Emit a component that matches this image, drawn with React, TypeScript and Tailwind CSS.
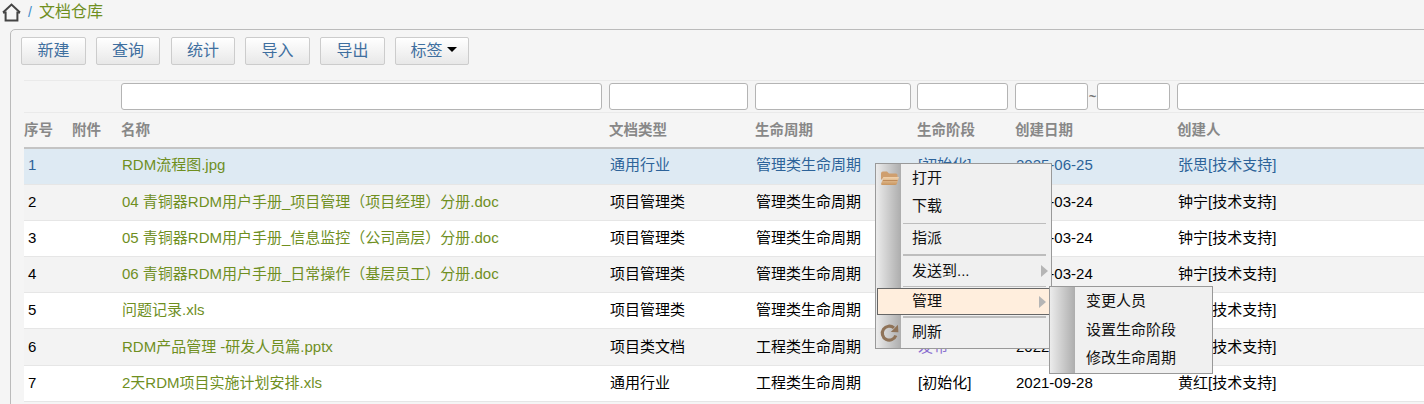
import type { ReactNode } from 'react'

const FONT = "font-['Liberation_Sans','Noto_Sans_CJK_SC',sans-serif]"
const GRID = 'grid grid-cols-[48px_49px_488px_146px_162px_98px_162px_300px]'

type Doc = {
  id: number
  name: string
  type: string
  cycle: string
  stage: string
  date: string
  owner: string
}

const docs: Doc[] = [
  { id: 1, name: 'RDM流程图.jpg', type: '通用行业', cycle: '管理类生命周期', stage: '[初始化]', date: '2025-06-25', owner: '张思[技术支持]' },
  { id: 2, name: '04 青铜器RDM用户手册_项目管理（项目经理）分册.doc', type: '项目管理类', cycle: '管理类生命周期', stage: '[初始化]', date: '2021-03-24', owner: '钟宁[技术支持]' },
  { id: 3, name: '05 青铜器RDM用户手册_信息监控（公司高层）分册.doc', type: '项目管理类', cycle: '管理类生命周期', stage: '[初始化]', date: '2021-03-24', owner: '钟宁[技术支持]' },
  { id: 4, name: '06 青铜器RDM用户手册_日常操作（基层员工）分册.doc', type: '项目管理类', cycle: '管理类生命周期', stage: '[初始化]', date: '2021-03-24', owner: '钟宁[技术支持]' },
  { id: 5, name: '问题记录.xls', type: '项目管理类', cycle: '管理类生命周期', stage: '[初始化]', date: '2021-03-24', owner: '钟宁[技术支持]' },
  { id: 6, name: 'RDM产品管理 -研发人员篇.pptx', type: '项目类文档', cycle: '工程类生命周期', stage: '发布', date: '2022-03-24', owner: '钟宁[技术支持]' },
  { id: 7, name: '2天RDM项目实施计划安排.xls', type: '通用行业', cycle: '工程类生命周期', stage: '[初始化]', date: '2021-09-28', owner: '黄红[技术支持]' },
]

const buttons = [
  { label: '新建', width: 'w-[65px]' },
  { label: '查询', width: 'w-[64px]' },
  { label: '统计', width: 'ml-px w-[64px]' },
  { label: '导入', width: 'w-[65px]' },
  { label: '导出', width: 'w-[65px]' },
]

const btnClass =
  'h-[28px] rounded-[2px] border border-[#cccccc] bg-gradient-to-b from-white to-[#e8e8e8] text-[16px] text-[#3f6f9f] flex items-center justify-center'

function FilterInput({ className }: { className: string }) {
  return <div className={`h-[27px] rounded-[3px] border border-[#b4b4b4] bg-white ${className}`} />
}

function FolderIcon() {
  return (
    <svg width="20" height="16" viewBox="0 0 20 16">
      <defs>
        <linearGradient id="folderFill" x1="0" y1="0" x2="0" y2="1">
          <stop offset="0" stopColor="#f1d3ae" />
          <stop offset="1" stopColor="#c8955f" />
        </linearGradient>
      </defs>
      <path d="M1 3.5 Q1 1.5 3 1.5 H7 L9 3.5 H16 Q17.5 3.5 17.5 5 V7 H4 L1 10 Z" fill="#cf9f6f" />
      <path d="M1 14 L3.5 7 H19 L17 13.5 Q16.6 15 15 15 H2.5 Q1 15 1 14 Z" fill="url(#folderFill)" />
      <path d="M3 10.5 H17.5" stroke="#b57f4c" strokeWidth="0.8" />
    </svg>
  )
}

function RefreshIcon() {
  return (
    <svg width="19" height="19" viewBox="0 0 18 18" fill="none">
      <path d="M15 11.4 A6.6 6.6 0 1 1 13.2 4.2" stroke="#8f7358" strokeWidth="3" />
      <path d="M10.2 8 L17.4 8.2 L17 1.2 Z" fill="#8f7358" />
    </svg>
  )
}

function Arrow() {
  return <span className="absolute right-[3px] top-1/2 -translate-y-1/2 border-y-[6px] border-l-[7px] border-y-transparent border-l-[#b5b5b5]" />
}

function Sep({ height, thick }: { height: string; thick?: boolean }) {
  return (
    <div className={`flex items-center pl-[27px] pr-[5px] ${height}`}>
      <div className={`w-full bg-[#bdbdbd] ${thick ? 'h-[2px]' : 'h-px'}`} />
    </div>
  )
}

function MenuItem({ label, height, icon, arrow, active }: { label: string; height: string; icon?: ReactNode; arrow?: boolean; active?: boolean }) {
  return (
    <div
      className={`relative flex items-center text-[15px] text-[#111111] ${height} ${
        active ? 'mx-px border border-[#666666] bg-[#ffeedd] pl-[34px]' : 'pl-[36px]'
      }`}
    >
      {icon && <span className="absolute left-[4px] top-1/2 -translate-y-1/2">{icon}</span>}
      {label}
      {arrow && <Arrow />}
    </div>
  )
}

function MenuShell({ className, strip, children }: { className: string; strip: string; children: ReactNode }) {
  return (
    <div className={`absolute border border-[#999999] bg-[#f0f0f0] ${className}`}>
      <div className={`absolute inset-y-0 left-0 bg-gradient-to-r from-[#ececec] to-[#adadad] ${strip}`} />
      <div className="relative">{children}</div>
    </div>
  )
}

export default function App() {
  return (
    <div className={`relative h-[404px] w-[1424px] overflow-hidden bg-[#f5f5f5] ${FONT}`}>
      {/* 面包屑 */}
      <div className="flex h-[29px] items-center pb-[5px] pl-[2px]">
        <svg width="19" height="19" viewBox="0 0 19 19" fill="none" stroke="#444444" strokeWidth="2">
          <path d="M1 9.5 L9.5 1.5 L18 9.5" />
          <path d="M1 9.5 H3.6 V17.6 H15.4 V9.5 H18" />
        </svg>
        <span className="ml-[7px] text-[14px] text-[#428bca]">/</span>
        <span className="ml-[7px] text-[16px] text-[#6f8f1f]">文档仓库</span>
      </div>

      {/* 主面板 */}
      <div className="ml-[10px] h-[400px] w-[1500px] rounded-tl-[5px] border border-[#bbbbbb] pl-[10px] pt-[7px]">
        <div className="flex gap-[10px]">
          {buttons.map((b) => (
            <div key={b.label} className={`${btnClass} ${b.width}`}>{b.label}</div>
          ))}
          <div className={`${btnClass} w-[74px] gap-[4px] pl-[3px]`}>
            标签
            <span className="mb-[4px] border-x-[5px] border-t-[5px] border-x-transparent border-t-black" />
          </div>
        </div>

        <div className="ml-[3px] mt-[15px] border-y border-[#eaeaea] pb-[2px] pt-[2px]">
          <div className={GRID}>
            <div />
            <div />
            <FilterInput className="w-[481px]" />
            <FilterInput className="w-[139px]" />
            <FilterInput className="w-[156px]" />
            <FilterInput className="w-[91px]" />
            <div className="flex items-center">
              <FilterInput className="w-[73px]" />
              <span className="w-[9px] text-center text-[13px] font-bold text-[#777777]">~</span>
              <FilterInput className="w-[73px]" />
            </div>
            <FilterInput className="w-[300px]" />
          </div>
        </div>

        <div className={`${GRID} ml-[3px] h-[36px] items-center border-b-[2px] border-[#c4c4c4] pt-px text-[14.5px] font-bold text-[#888888]`}>
          <div>序号</div>
          <div>附件</div>
          <div>名称</div>
          <div>文档类型</div>
          <div>生命周期</div>
          <div>生命阶段</div>
          <div>创建日期</div>
          <div>创建人</div>
        </div>

        {docs.map((d) => {
          const first = d.id === 1
          const bg = first ? 'bg-[#deeaf3]' : d.id % 2 === 0 ? 'bg-[#f3f3f3]' : 'bg-white'
          return (
            <div
              key={d.id}
              className={`${GRID} ml-[3px] items-center border-b border-[#e6e6e6] text-[15px] ${d.id === 6 ? 'h-[37px]' : 'h-[36px]'} ${bg} ${first ? 'pb-[2px] text-[#2d6399]' : 'text-black'}`}
            >
              <div className="pl-[4px]">{d.id}</div>
              <div />
              <div className="pl-[1px] text-[#6f8f1f]">{d.name}</div>
              <div className="pl-[1px]">{d.type}</div>
              <div className="pl-[1px]">{d.cycle}</div>
              <div className={`pl-[1px] ${d.stage === '发布' ? 'text-[#8a6fd0]' : ''}`}>{d.stage}</div>
              <div className="pl-[1px]">{d.date}</div>
              <div className="pl-[1px]">{d.owner}</div>
            </div>
          )
        })}
      </div>

      {/* 右键菜单 */}
      <MenuShell className="left-[875px] top-[163px] h-[186px] w-[177px]" strip="w-[25px]">
        <MenuItem label="打开" height="h-[28px]" icon={<FolderIcon />} />
        <MenuItem label="下载" height="h-[29px]" />
        <Sep height="h-[4px]" />
        <MenuItem label="指派" height="h-[27px]" />
        <Sep height="h-[6px]" thick />
        <MenuItem label="发送到..." height="h-[26px]" arrow />
        <Sep height="h-[4px]" />
        <MenuItem label="管理" height="h-[27px]" arrow active />
        <Sep height="h-[4px]" thick />
        <MenuItem label="刷新" height="h-[27px]" icon={<RefreshIcon />} />
      </MenuShell>

      <MenuShell className="left-[1049px] top-[286px] h-[88px] w-[164px]" strip="w-[25px]">
        <div className="pt-px">
          <MenuItem label="变更人员" height="h-[27px]" />
          <MenuItem label="设置生命阶段" height="h-[31px]" />
          <MenuItem label="修改生命周期" height="h-[24px]" />
        </div>
      </MenuShell>
    </div>
  )
}
